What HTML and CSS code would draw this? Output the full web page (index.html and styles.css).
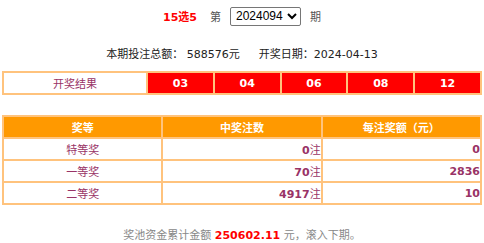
FILE: index.html
```html
<!DOCTYPE html>
<html>
<head>
<meta charset="utf-8">
<link rel="stylesheet" href="styles.css">
</head>
<body>
<div class="page">
  <div class="title">
    <span class="game">15选5</span>
    <span class="label">第</span>
    <select class="issue"><option>2024094</option></select>
    <span class="label">期</span>
  </div>
  <div class="info">本期投注总额： 588576元<span class="sep"></span>开奖日期：2024-04-13</div>
  <table class="result">
    <tr>
      <td class="rlabel">开奖结果</td>
      <td class="ball">03</td>
      <td class="ball">04</td>
      <td class="ball">06</td>
      <td class="ball">08</td>
      <td class="ball">12</td>
    </tr>
  </table>
  <table class="prize">
    <tr>
      <th>奖等</th>
      <th>中奖注数</th>
      <th>每注奖额（元）</th>
    </tr>
    <tr>
      <td class="name">特等奖</td>
      <td class="num"><b>0</b>注</td>
      <td class="num"><b>0</b></td>
    </tr>
    <tr>
      <td class="name">一等奖</td>
      <td class="num"><b>70</b>注</td>
      <td class="num"><b>2836</b></td>
    </tr>
    <tr>
      <td class="name">二等奖</td>
      <td class="num"><b>4917</b>注</td>
      <td class="num"><b>10</b></td>
    </tr>
  </table>
  <div class="pool">奖池资金累计金额 <span class="amount">250602.11</span> 元，滚入下期。</div>
</div>
</body>
</html>
```
FILE: styles.css
```css
html, body {
  margin: 0;
  padding: 0;
  background: #fff;
}
body {
  font-family: "DejaVu Sans", "Noto Sans CJK SC", sans-serif;
  font-size: 11px;
  color: #333;
}
.page {
  width: 480px;
  margin: 0 auto;
}
.title {
  height: 28px;
  padding-top: 4px;
  display: flex;
  justify-content: center;
  align-items: center;
  box-sizing: border-box;
}
.title .game {
  color: #ff0000;
  font-weight: bold;
  margin-right: 13px;
}
.title .label {
  color: #555;
}
.issue {
  font-family: "Liberation Sans", sans-serif;
  font-size: 12px;
  height: 19px;
  margin: 0 9px;
  padding: 0 1px;
  border: 1px solid #767676;
  border-radius: 2px;
  background: #fff;
  color: #000;
}
.info {
  margin-top: 19px;
  height: 16px;
  line-height: 16px;
  text-align: center;
  color: #222;
}
.info .sep {
  display: inline-block;
  width: 19px;
}
table {
  border-collapse: separate;
  border-spacing: 2px;
  background: #ffc37d;
  width: 480px;
}
.result {
  margin-top: 8px;
}
.result td {
  height: 20px;
  padding: 0;
  text-align: center;
}
.rlabel {
  width: 142px;
  background: #fff;
  color: #993366;
  font-family: "Noto Sans CJK SC", sans-serif;
}
.ball {
  background: #ff0000;
  color: #fff;
  font-weight: bold;
}
.prize {
  margin-top: 20px;
  table-layout: fixed;
}
.prize th {
  background: #ff9900;
  color: #fff;
  font-weight: bold;
  height: 20px;
  padding: 0;
  font-family: "Noto Sans CJK SC", sans-serif;
}
.prize td {
  background: #fff;
  height: 20px;
  padding: 0;
  color: #993366;
}
.prize td.name {
  text-align: center;
  font-family: "Noto Sans CJK SC", sans-serif;
}
.prize td.num {
  text-align: right;
}
.pool {
  margin-top: 22px;
  text-align: center;
  color: #888;
  height: 18px;
  line-height: 18px;
}
.pool .amount {
  color: #ff0000;
  font-weight: bold;
}
```
